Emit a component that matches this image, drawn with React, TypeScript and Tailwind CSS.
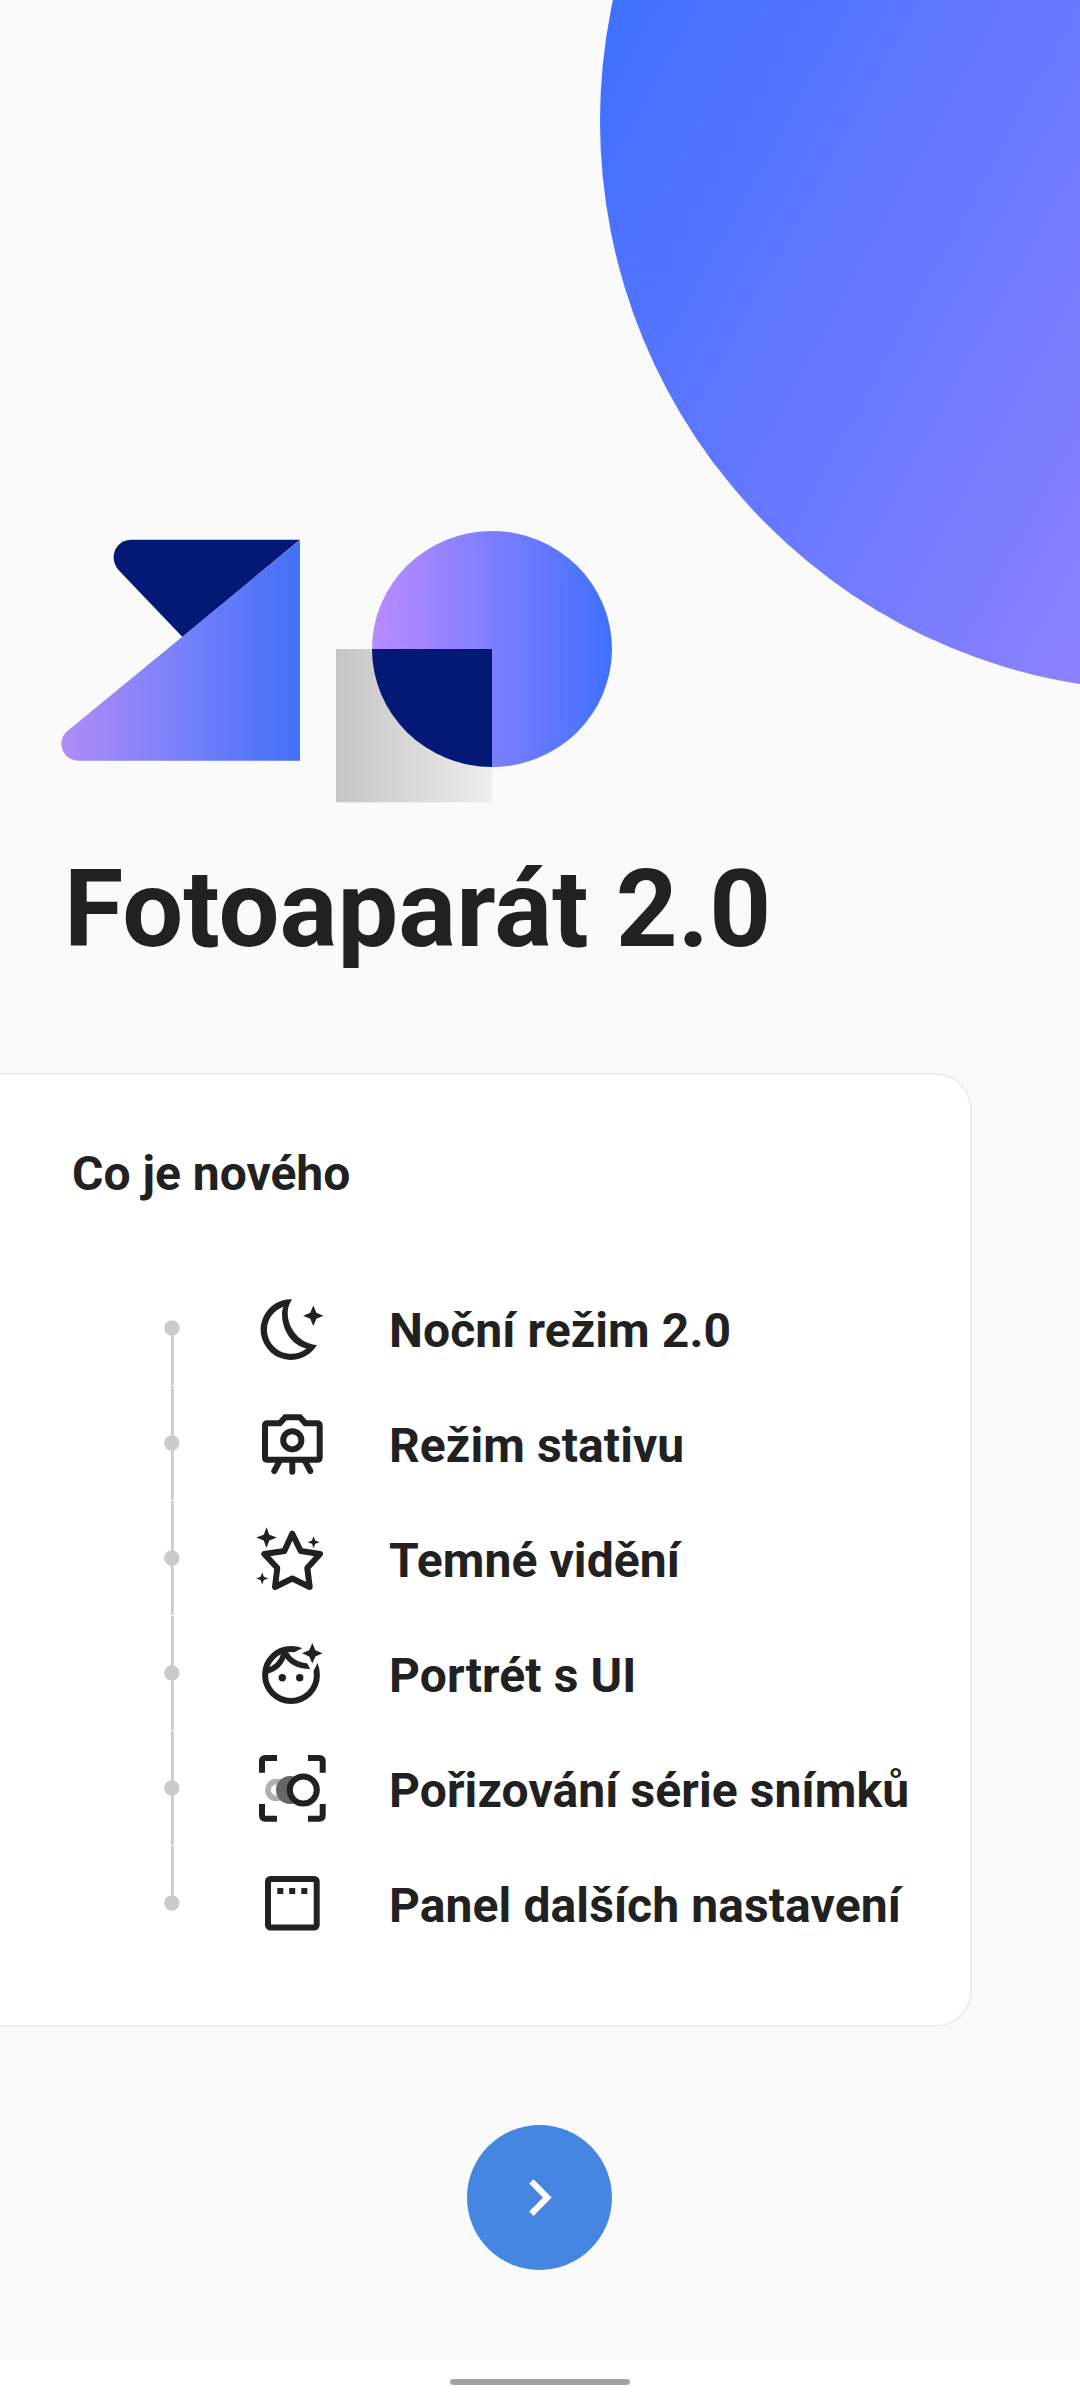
import React from "react";

type Feature = { label: string; icon: React.ReactNode };

const INK = "#212121";

// Four-pointed sparkle centred on (x, y) with arm length r; waist sets how full the body is.
function Sparkle({ x, y, r, fill = INK, waist = 0.27 }: { x: number; y: number; r: number; fill?: string; waist?: number }) {
  const k = r * waist;
  return (
    <path
      fill={fill}
      stroke="none"
      d={`M${x} ${y - r}L${x + k} ${y - k}L${x + r} ${y}L${x + k} ${y + k}L${x} ${y + r}L${x - k} ${y + k}L${x - r} ${y}L${x - k} ${y - k}Z`}
    />
  );
}

function Icon({ children }: { children: React.ReactNode }) {
  return (
    <svg className="h-[72px] w-[72px] shrink-0" viewBox="0 0 72 72" fill="none" stroke={INK} strokeWidth="6">
      {children}
    </svg>
  );
}

function MoonIcon() {
  return (
    <Icon>
      <path
        fill={INK}
        stroke="none"
        fillRule="evenodd"
        d="M36 7.300A30.300 30.300 0 1 0 61 53C45 52 31.700 37.500 31.700 21C31.700 15.500 33.500 11.500 36 7.300ZM27.300 14.700C17.500 18.500 11 27 11 37.700C11 51 22 61.800 35.200 61.800C41 61.800 46.300 59.800 50.500 56.500C36 53.500 26 38 26 22C26 19 26.500 17 27.300 14.700Z"
      />
      <Sparkle x={57.3} y={23.7} r={10.2} waist={0.3} />
    </Icon>
  );
}

function TripodIcon() {
  return (
    <Icon>
      <path d="M11.500 16.300H23.800L29.300 10.300H44L49.300 16.300H61.200Q63.700 16.300 63.700 18.800V50.200Q63.700 52.700 61.200 52.700H11.500Q9 52.700 9 50.200V18.800Q9 16.300 11.500 16.300Z" />
      <circle cx="36.300" cy="33.300" r="9.100" />
      <path strokeLinecap="round" d="M23.300 54.700L18.300 64M36.300 54V64.700M49.300 54.700L54.300 64" />
    </Icon>
  );
}

function StarIcon() {
  return (
    <Icon>
      <path
        strokeLinejoin="round"
        d="M36.300 11.700L44.700 29L64 32L51.300 46L53.700 65L36.300 56.500L19 65L21.300 46L8.300 32L28.300 29Z"
      />
      <Sparkle x={10.5} y={15.6} r={10.3} />
      <Sparkle x={57.6} y={20.2} r={6} />
      <Sparkle x={6.2} y={56.4} r={6} />
    </Icon>
  );
}

function PortraitIcon() {
  return (
    <Icon>
      <circle cx="35" cy="38" r="25.900" />
      <path d="M28.300 14C33 24 42 29.500 55 29.300" strokeWidth="5.500" />
      <path d="M28.500 15.500C26 25 19.500 32 10 34.300" strokeWidth="5.500" />
      <circle cx="26.300" cy="40.700" r="3.700" fill={INK} stroke="none" />
      <circle cx="43.700" cy="40.700" r="3.700" fill={INK} stroke="none" />
      <Sparkle x={56.3} y={16.3} r={20} fill="#ffffff" waist={0.34} />
      <Sparkle x={56.3} y={16.3} r={10.3} waist={0.3} />
    </Icon>
  );
}

function BurstIcon() {
  return (
    <Icon>
      <path d="M21 6H9.500Q6 6 6 9.500V20.700M52 6H63.200Q66.700 6 66.700 9.500V20.700M66.700 52V63.200Q66.700 66.700 63.200 66.700H52M21 66.700H9.500Q6 66.700 6 63.200V52" />
      <circle cx="20.300" cy="38" r="8.300" stroke="#b0b0b0" strokeWidth="5.700" />
      <circle cx="34" cy="38" r="14" fill="#666666" stroke="none" />
      <circle cx="47.300" cy="38" r="13.500" fill="#ffffff" />
    </Icon>
  );
}

function PanelIcon() {
  return (
    <Icon>
      <rect x="12" y="12" width="48.700" height="48.500" rx="2.500" />
      <path fill={INK} stroke="none" d="M21.300 21h6v6h-6zM33.200 21h6v6h-6zM45.300 21h6v6h-6z" />
    </Icon>
  );
}

const features: Feature[] = [
  { label: "Noční režim 2.0", icon: <MoonIcon /> },
  { label: "Režim stativu", icon: <TripodIcon /> },
  { label: "Temné vidění", icon: <StarIcon /> },
  { label: "Portrét s UI", icon: <PortraitIcon /> },
  { label: "Pořizování série snímků", icon: <BurstIcon /> },
  { label: "Panel dalších nastavení", icon: <PanelIcon /> },
];

function CornerCircle() {
  return (
    <svg className="absolute top-0 right-0 h-[700px] w-[500px]" viewBox="580 0 500 700">
      <defs>
        <linearGradient id="corner" gradientUnits="userSpaceOnUse" x1="600" y1="50" x2="1606" y2="600">
          <stop offset="0" stopColor="#4070ff" />
          <stop offset="0.500" stopColor="#7c7dff" />
          <stop offset="1" stopColor="#ba8bff" />
        </linearGradient>
      </defs>
      <ellipse cx="1168" cy="121" rx="568" ry="570" fill="url(#corner)" />
    </svg>
  );
}

function Emblem() {
  return (
    <svg className="h-[273px] w-[554px]" viewBox="60 530 554 273">
      <defs>
        <linearGradient id="fold" x1="0" x2="1" y1="0" y2="0">
          <stop offset="0" stopColor="#b08cf7" />
          <stop offset="0.500" stopColor="#7880fa" />
          <stop offset="1" stopColor="#4270f6" />
        </linearGradient>
        <linearGradient id="disc" x1="0" x2="1" y1="0" y2="0">
          <stop offset="0" stopColor="#ba8bff" />
          <stop offset="0.500" stopColor="#7e7eff" />
          <stop offset="1" stopColor="#3f70ff" />
        </linearGradient>
        <linearGradient id="tile" x1="0" x2="1" y1="0" y2="0">
          <stop offset="0" stopColor="#c5c5c5" />
          <stop offset="1" stopColor="#ededed" />
        </linearGradient>
        <clipPath id="tileClip">
          <rect x="336" y="649" width="156" height="153.300" />
        </clipPath>
      </defs>
      <path fill="#041875" d="M300 539.700H131C115.500 539.700 108 558 118.500 570L182.500 637Z" />
      <path fill="url(#fold)" d="M300 540V760.700H78.500C62.500 760.700 55 741 68 730.500Z" />
      <ellipse cx="492" cy="649" rx="120" ry="118" fill="url(#disc)" />
      <rect x="336" y="649" width="156" height="153.300" fill="url(#tile)" />
      <ellipse cx="492" cy="649" rx="120" ry="118" fill="#041875" clipPath="url(#tileClip)" />
    </svg>
  );
}

export default function App() {
  return (
    <main className="relative flex h-[2400px] w-[1080px] flex-col overflow-hidden bg-[#fafafa] font-['Roboto',sans-serif] text-[#212121]">
      <CornerCircle />
      <div className="relative mt-[530px] ml-[60px]">
        <Emblem />
      </div>
      <h1 className="mt-[43px] ml-[64px] text-[108px] leading-[127px] font-bold tracking-[0.1px]">Fotoaparát 2.0</h1>
      <section className="mt-[100px] h-[954px] w-[972px] shrink-0 rounded-r-[36px] border-2 border-l-0 border-[#ededed] bg-white">
        <h2 className="mt-[70px] ml-[72px] text-[48px] leading-[57px] font-bold">Co je nového</h2>
        <ul className="mt-[69px] flex flex-col gap-px">
          {features.map((f, i) => (
            <li key={f.label} className="flex h-[114px] items-center text-[48px] leading-[57px] font-bold tracking-[0.1px]">
              <svg className="ml-[160px] h-full w-6 shrink-0" viewBox="0 0 24 114" fill="#cbcbcb">
                {i > 0 && <rect x="11" y="0" width="2.700" height="57" />}
                {i < features.length - 1 && <rect x="11" y="57" width="2.700" height="57" />}
                <circle cx="11.800" cy="57" r="7.700" />
              </svg>
              <div className="ml-[72px]">{f.icon}</div>
              <span className="ml-[61px] pt-[5px]">{f.label}</span>
            </li>
          ))}
        </ul>
      </section>
      <button
        type="button"
        aria-label="Další"
        className="mt-[98px] ml-[467px] h-[145px] w-[145px] shrink-0 rounded-full bg-[#4486e1]"
      >
        <svg viewBox="0 0 145 145" className="h-full w-full" fill="none" stroke="#ffffff" strokeWidth="6.200">
          <path d="M64.300 56.300L80.300 72.600L64.300 88.700" />
        </svg>
      </button>
      <footer className="mt-auto flex h-10 justify-center bg-white pt-[19px]">
        <div className="h-1.5 w-[180px] rounded-full bg-[#a2a2a2]" />
      </footer>
    </main>
  );
}
